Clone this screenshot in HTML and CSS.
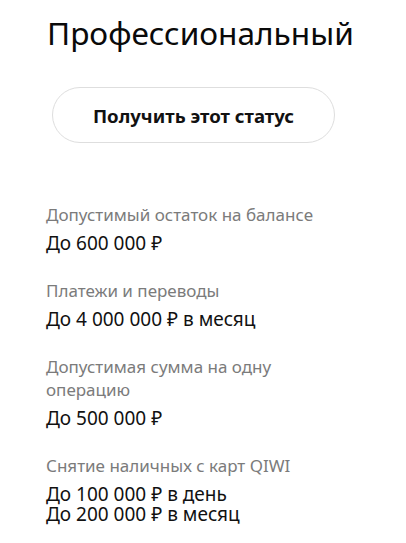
FILE: index.html
```html
<!DOCTYPE html>
<html lang="ru">
<head>
<meta charset="utf-8">
<link rel="stylesheet" href="styles.css">
</head>
<body>
<main class="page">
  <h1 class="title">Профессиональный</h1>
  <button class="cta">Получить этот статус</button>
  <dl class="limits">
    <div class="limit">
      <dt class="label">Допустимый остаток на балансе</dt>
      <dd class="value">До 600 000 ₽</dd>
    </div>
    <div class="limit">
      <dt class="label">Платежи и переводы</dt>
      <dd class="value">До 4 000 000 ₽ в месяц</dd>
    </div>
    <div class="limit">
      <dt class="label">Допустимая сумма на одну операцию</dt>
      <dd class="value">До 500 000 ₽</dd>
    </div>
    <div class="limit">
      <dt class="label">Снятие наличных с карт QIWI</dt>
      <dd class="value">До 100 000 ₽ в день<br>До 200 000 ₽ в месяц</dd>
    </div>
  </dl>
</main>
</body>
</html>
```
FILE: styles.css
```css
* { box-sizing: border-box; }
html, body { margin: 0; padding: 0; background: #fff; }
body {
  font-family: "Noto Sans", "Open Sans", sans-serif;
  color: #000;
  width: 406px;
  height: 543px;
  overflow: hidden;
}
.page {
  padding: 13px 0 0 46px;
  display: flex;
  flex-direction: column;
  align-items: flex-start;
}
.title {
  margin: 0 0 0 1px;
  font-weight: 400;
  font-size: 31.6px;
  line-height: 40px;
  color: #0a0a0a;
}
.cta {
  margin: 34px 0 0 6px;
  width: 283px;
  height: 56px;
  border: 1px solid #dedede;
  border-radius: 28px;
  background: #fff;
  font-family: inherit;
  font-size: 18.6px;
  font-weight: 700;
  color: #111;
  padding: 0;
}
.limits {
  margin: 60px 0 0 0;
  display: flex;
  flex-direction: column;
  gap: 26px;
}
.limit { margin: 0; }
.label {
  font-size: 17px;
  line-height: 23px;
  color: #7b7b7b;
  width: 292px;
}
.value {
  margin: 7px 0 0 0;
  font-size: 19px;
  line-height: 20px;
  color: #111;
}
```
